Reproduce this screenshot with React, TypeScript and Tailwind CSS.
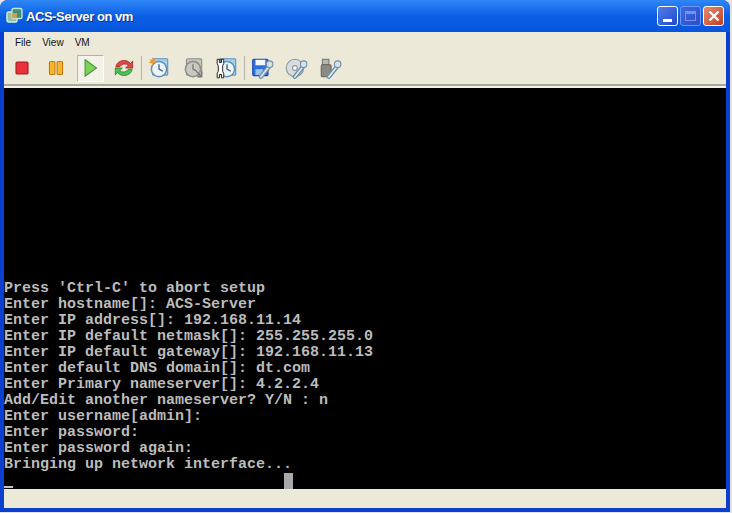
import React from "react";

const lines = [
  "Press 'Ctrl-C' to abort setup",
  "Enter hostname[]: ACS-Server",
  "Enter IP address[]: 192.168.11.14",
  "Enter IP default netmask[]: 255.255.255.0",
  "Enter IP default gateway[]: 192.168.11.13",
  "Enter default DNS domain[]: dt.com",
  "Enter Primary nameserver[]: 4.2.2.4",
  "Add/Edit another nameserver? Y/N : n",
  "Enter username[admin]:",
  "Enter password:",
  "Enter password again:",
  "Bringing up network interface...",
];

function Slot({ children, pressed }: { children: React.ReactNode; pressed?: boolean }) {
  return (
    <div className={pressed
      ? "w-[27px] h-[27px] mx-[3.5px] flex items-center justify-center border border-[#b5b2a4] border-b-white border-r-white bg-[#f4f2e8]"
      : "w-[34px] h-[27px] flex items-center justify-center"}>
      <svg width="24" height="24" viewBox="0 0 22 22">{children}</svg>
    </div>
  );
}

function Wrench() {
  return (
    <g>
      <path d="M10 19 L18 9" stroke="#6f8fa8" strokeWidth="4" strokeLinecap="round" />
      <path d="M10 19 L18 9" stroke="#dfe8ee" strokeWidth="1.6" strokeLinecap="round" />
      <circle cx="18" cy="7.5" r="3" fill="#d6e2ea" stroke="#6f8fa8" />
    </g>
  );
}

function Clock({ fill, face, stroke, hand }: { fill: string; face: string; stroke: string; hand: string }) {
  return (
    <g>
      <rect x="5" y="2.5" width="14" height="15" rx="1" fill={fill} stroke={stroke} />
      <circle cx="11" cy="12" r="7" fill={face} stroke={stroke} strokeWidth="1.4" />
      <path d="M11 7.5V12L14.5 14" fill="none" stroke={hand} strokeWidth="1.2" />
    </g>
  );
}

export default function App() {
  return (
    <div className="w-[732px] h-[513px] bg-[#e4e4e4] overflow-hidden" style={{ fontFamily: "'Liberation Sans', sans-serif" }}>
      <div className="w-[730px] h-[512px] flex flex-col rounded-t-[8px] overflow-hidden bg-[#0a3fd0]">
        <div className="h-[32px] shrink-0 flex items-center justify-between pl-[6px] pr-[6px] pt-[2px] bg-gradient-to-b from-[#2f86f5] via-[#0a5fe6] to-[#0855dd]">
          <div className="flex items-center gap-[3px]">
            <svg width="17" height="17" viewBox="0 0 17 17" className="mb-[3px]">
              <rect x="1" y="5" width="10" height="10" rx="1.5" fill="#8fc3a8" stroke="#d8efe0" strokeWidth="1.4" />
              <rect x="6" y="1.5" width="10" height="10" rx="1.5" fill="#3f8f78" stroke="#bfe4d0" strokeWidth="1.4" />
              <rect x="6" y="6" width="5" height="5" fill="#c9a24a" />
            </svg>
            <span className="text-white font-bold text-[13px] tracking-[-0.45px] [text-shadow:1px_1px_0_#0a2f90]">ACS-Server on vm</span>
          </div>
          <div className="flex items-center gap-[2px] mb-[2px]">
            <div className="w-[21px] h-[20px] rounded-[3px] border border-white bg-gradient-to-br from-[#4f7fee] to-[#2446c8] relative">
              <div className="absolute left-[5px] bottom-[3px] w-[9px] h-[3px] bg-white" />
            </div>
            <div className="w-[21px] h-[20px] rounded-[3px] border border-[#6f93ee] bg-gradient-to-br from-[#3f6ae0] to-[#2a4cc8] flex items-center justify-center">
              <div className="w-[11px] h-[10px] border border-[#6f93ee] border-t-[3px]" />
            </div>
            <div className="w-[21px] h-[20px] rounded-[3px] border border-white bg-gradient-to-br from-[#e88a6e] to-[#c23c1c] flex items-center justify-center">
              <svg width="14" height="14" viewBox="0 0 14 14"><path d="M2.5 2.5L11.5 11.5M11.5 2.5L2.5 11.5" stroke="#fff" strokeWidth="2.4" /></svg>
            </div>
          </div>
        </div>

        <div className="flex-1 min-h-0 mx-[4px] flex flex-col bg-[#ece9d8]">
          <div className="h-[20px] shrink-0 flex items-center gap-[11px] pl-[11px] pt-[1px] text-[10px] text-[#111]">
            <span>File</span>
            <span>View</span>
            <span>VM</span>
          </div>
          <div className="h-[34px] shrink-0 flex items-center pl-[1px] border-b-2 border-[#aca899]">
            <Slot><rect x="5.5" y="5.5" width="11" height="11" rx="1" fill="#e8303a" stroke="#a81820" /></Slot>
            <Slot>
              <rect x="5" y="5" width="5" height="12" rx="1" fill="#f6b52a" stroke="#c07a10" />
              <rect x="12" y="5" width="5" height="12" rx="1" fill="#f6b52a" stroke="#c07a10" />
            </Slot>
            <Slot pressed><path d="M6.5 3.5L17 11L6.5 18.5Z" fill="#7fd05a" stroke="#3f9a3a" /></Slot>
            <Slot>
              <path d="M3.5 10A7.5 7 0 0 1 17 7L19 4.5V11H12.5L15 8.5A5 4.5 0 0 0 7 10Z" fill="#e04848" stroke="#a82020" strokeWidth="0.7" />
              <path d="M18.5 12A7.5 7 0 0 1 5 15L3 17.5V11H9.5L7 13.5A5 4.5 0 0 0 15 12Z" fill="#4fc04f" stroke="#208030" strokeWidth="0.7" />
            </Slot>
            <div className="w-px h-[24px] bg-[#b8b5a5]" />
            <Slot>
              <Clock fill="#a8cfe8" face="#eef3f7" stroke="#5f93bf" hand="#35618a" />
              <path d="M5 1L6 3.5L8.5 2.5L7 5L9 6L6 6.5L5 9L4 6.5L1 6L3.5 4.5L2 2.5L4.5 3.5Z" fill="#f09a3a" />
            </Slot>
            <Slot><Clock fill="#c4c4bc" face="#c9c9c2" stroke="#8f8f88" hand="#777" /><path d="M14 14L19 19M19 14V19H15" stroke="#777" fill="none" strokeWidth="1.2" /></Slot>
            <Slot>
              <Clock fill="#a8cfe8" face="#eef3f7" stroke="#5f93bf" hand="#35618a" />
              <path d="M4 3H8V7L7 9V14L8 16V20H6V17H4V20H2V16L3 14V9L2 7V3H4V6H6V3" fill="#fff" stroke="#222" strokeWidth="0.9" />
            </Slot>
            <div className="w-px h-[24px] bg-[#b8b5a5]" />
            <Slot>
              <rect x="2.5" y="3" width="14" height="15" rx="1" fill="#2f6fe0" stroke="#1a4aa8" />
              <rect x="5" y="3.5" width="9" height="5" fill="#f2f5fb" />
              <rect x="5" y="12" width="7" height="5.5" fill="#9cc0ee" />
              <Wrench />
            </Slot>
            <Slot>
              <circle cx="10" cy="11" r="8" fill="#d8dcdf" stroke="#8d979d" />
              <circle cx="10" cy="11" r="2.2" fill="#fff" stroke="#8d979d" />
              <Wrench />
            </Slot>
            <Slot>
              <rect x="4" y="3" width="6" height="5" fill="#b8b8b0" stroke="#77776f" />
              <rect x="3" y="8" width="9" height="11" rx="1" fill="#8b8b83" stroke="#66665f" />
              <Wrench />
            </Slot>
          </div>
          <div className="h-[2px] shrink-0 bg-[#f4f2e8]" />

          <div className="flex-1 min-h-0 bg-black flex flex-col justify-end font-bold text-[#bcbcbc] text-[15px] leading-[16px] whitespace-pre" style={{ fontFamily: "'Liberation Mono', monospace" }}>
            {lines.map((l) => (
              <div key={l} className="h-[16px]">{l}</div>
            ))}
            <div className="h-[16px] flex items-end">
              <div className="w-[9px] h-[2px] mb-[1px] bg-[#c4c4c4]" />
              <div className="w-[9px] h-[16px] ml-[271px] bg-[#a8a8a8]" />
            </div>
          </div>

          <div className="h-[19px] shrink-0 bg-[#ece9d8]" />
        </div>
        <div className="h-[4px] shrink-0" />
      </div>
    </div>
  );
}
